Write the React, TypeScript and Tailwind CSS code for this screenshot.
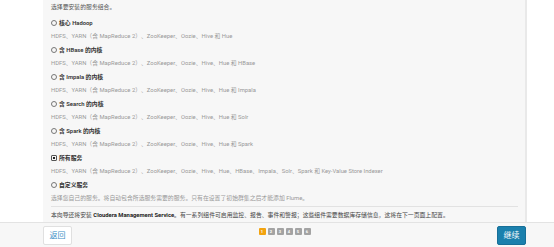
const font = { fontFamily: 'Roboto, "Noto Sans CJK SC", sans-serif' }

const options = [
  { title: "核心 Hadoop", desc: "HDFS、YARN（含 MapReduce 2）、ZooKeeper、Oozie、Hive 和 Hue" },
  { title: "含 HBase 的内核", desc: "HDFS、YARN（含 MapReduce 2）、ZooKeeper、Oozie、Hive、Hue 和 HBase" },
  { title: "含 Impala 的内核", desc: "HDFS、YARN（含 MapReduce 2）、ZooKeeper、Oozie、Hive、Hue 和 Impala" },
  { title: "含 Search 的内核", desc: "HDFS、YARN（含 MapReduce 2）、ZooKeeper、Oozie、Hive、Hue 和 Solr" },
  { title: "含 Spark 的内核", desc: "HDFS、YARN（含 MapReduce 2）、ZooKeeper、Oozie、Hive、Hue 和 Spark" },
  {
    title: "所有服务",
    desc: "HDFS、YARN（含 MapReduce 2）、ZooKeeper、Oozie、Hive、Hue、HBase、Impala、Solr、Spark 和 Key-Value Store Indexer",
    checked: true,
  },
  { title: "自定义服务", desc: "选择您自己的服务。将自动包含所选服务需要的服务。只有在设置了初始群集之后才能添加 Flume。" },
]

const Radio = ({ checked }: { checked?: boolean }) =>
  checked ? (
    <span className="w-[6px] h-[6px] border border-[#555] rounded-[1px] flex items-center justify-center mr-[2px]">
      <span className="w-[2px] h-[2px] bg-[#222]" />
    </span>
  ) : (
    <span className="w-[6px] h-[6px] border border-[#777] rounded-full mr-[2px]" />
  )

export default function App() {
  return (
    <div className="w-[554px] h-[247px] bg-white flex flex-col overflow-hidden" style={font}>
      {/* Panel */}
      <div className="flex-1 pl-[43px] pr-[27px]">
        <div className="h-full bg-[#f7f7f7] border-r-2 border-[#e9e9e9] pl-[8px] pr-[7px]">
          <div className="text-[5.85px] leading-[14px] text-[#555] mb-[2.25px]">选择要安装的服务组合。</div>

          {options.map(o => (
            <div key={o.title}>
              <div className="h-[13.5px] flex items-center text-[5.85px] font-semibold text-[#333]">
                <Radio checked={o.checked} />
                {o.title}
              </div>
              <div className="h-[13.5px] flex items-center text-[5.85px] text-[#999] whitespace-nowrap">{o.desc}</div>
            </div>
          ))}

          <div className="border-t border-[#e2e2e2] mt-[0.25px] pt-[2px]">
            <div className="h-[13.5px] flex items-center text-[5.85px] text-[#444] whitespace-nowrap">
              本向导还将安装&nbsp;<b className="text-[#222]">Cloudera Management Service</b>。有一系列组件可启用监控、报告、事件和警报；这些组件需要数据库存储信息，这将在下一页面上配置。
            </div>
          </div>
        </div>
      </div>

      {/* Footer */}
      <div className="h-[26px] bg-[#f7f7f7] border-t border-[#e3e3e3] pl-[43px] pr-[28px] pt-[3px] flex items-start justify-between">
        <button className="w-[29px] h-[19px] bg-white border border-[#e0e0e0] rounded-[2px] text-[8px] text-[#3d8fc6] flex items-center justify-center">
          返回
        </button>

        <div className="flex gap-[2px] mt-[2px]">
          {[1, 2, 3, 4, 5, 6].map(n => (
            <span
              key={n}
              className={
                n === 1
                  ? "w-[7px] h-[7px] rounded-[1px] bg-[#f2a30f] text-white text-[4px] font-bold flex items-center justify-center"
                  : "w-[7px] h-[7px] rounded-[1px] bg-[#a3a3a3] text-white text-[4px] font-bold flex items-center justify-center"
              }
            >
              {n}
            </span>
          ))}
        </div>

        <button className="w-[29px] h-[19px] bg-[#1b80ad] border border-[#176f98] rounded-[2px] text-[8px] text-white flex items-center justify-center">
          继续
        </button>
      </div>
    </div>
  )
}
